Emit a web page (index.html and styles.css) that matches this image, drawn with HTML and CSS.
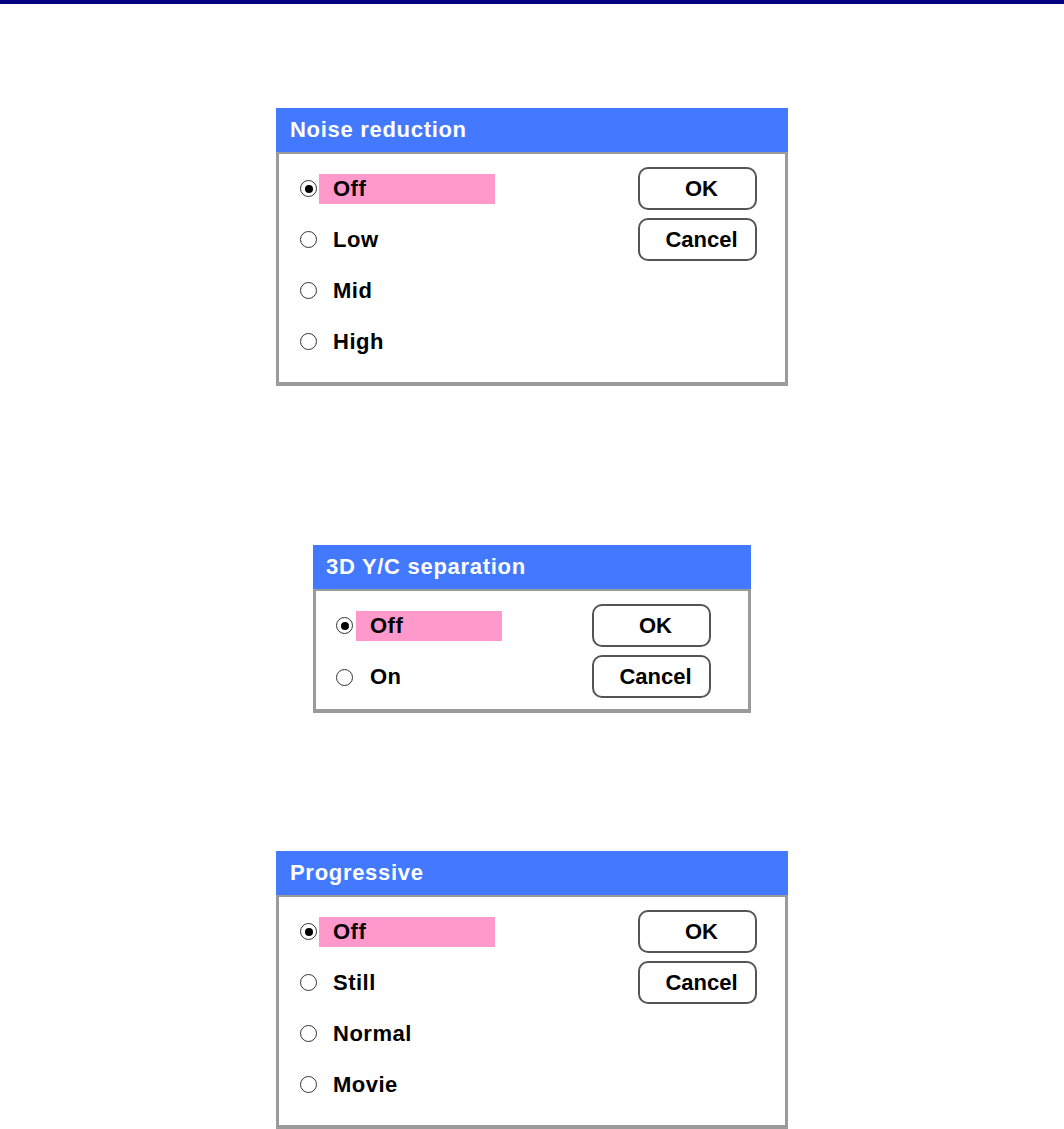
FILE: index.html
```html
<!DOCTYPE html>
<html>
<head>
<meta charset="utf-8">
<link rel="stylesheet" href="styles.css">
</head>
<body>
<div class="topbar"></div>
<main class="page">
  <section class="dialog dialog-wide dialog-first">
    <header class="dialog-title">Noise reduction</header>
    <div class="dialog-body">
      <ul class="options">
        <li class="option selected"><span class="radio"></span><span class="label">Off</span></li>
        <li class="option"><span class="radio"></span><span class="label">Low</span></li>
        <li class="option"><span class="radio"></span><span class="label">Mid</span></li>
        <li class="option"><span class="radio"></span><span class="label">High</span></li>
      </ul>
      <div class="buttons">
        <button class="btn">OK</button>
        <button class="btn">Cancel</button>
      </div>
    </div>
  </section>

  <section class="dialog dialog-narrow">
    <header class="dialog-title">3D Y/C separation</header>
    <div class="dialog-body">
      <ul class="options">
        <li class="option selected"><span class="radio"></span><span class="label">Off</span></li>
        <li class="option"><span class="radio"></span><span class="label">On</span></li>
      </ul>
      <div class="buttons">
        <button class="btn">OK</button>
        <button class="btn">Cancel</button>
      </div>
    </div>
  </section>

  <section class="dialog dialog-wide dialog-third">
    <header class="dialog-title">Progressive</header>
    <div class="dialog-body">
      <ul class="options">
        <li class="option selected"><span class="radio"></span><span class="label">Off</span></li>
        <li class="option"><span class="radio"></span><span class="label">Still</span></li>
        <li class="option"><span class="radio"></span><span class="label">Normal</span></li>
        <li class="option"><span class="radio"></span><span class="label">Movie</span></li>
      </ul>
      <div class="buttons">
        <button class="btn">OK</button>
        <button class="btn">Cancel</button>
      </div>
    </div>
  </section>
</main>
</body>
</html>
```

FILE: styles.css
```css
html, body {
  margin: 0;
  padding: 0;
  background: #ffffff;
}

body {
  font-family: "Liberation Sans", Arial, sans-serif;
  width: 1064px;
  height: 1129px;
  overflow: hidden;
}

.topbar {
  height: 4px;
  background: #000080;
}

.page {
  display: flex;
  flex-direction: column;
  align-items: center;
}

.dialog {
  display: flex;
  flex-direction: column;
}

.dialog-wide { width: 512px; }
.dialog-narrow { width: 438px; margin-top: 159px; }
.dialog-first { margin-top: 104px; }
.dialog-third { margin-top: 138px; }

.dialog-title {
  height: 44px;
  background: #4379ff;
  color: #ffffff;
  font-size: 22px;
  font-weight: bold;
  letter-spacing: 0.7px;
  line-height: 44px;
  padding-left: 14px;
}

.dialog-narrow .dialog-title { padding-left: 13px; }

.dialog-body {
  display: flex;
  justify-content: space-between;
  border-style: solid;
  border-color: #9a9a9a;
  border-width: 2px 3px 4px 3px;
  padding: 9px 28px 15px 21px;
}

.dialog-narrow .dialog-body {
  padding: 9px 37px 6px 20px;
}

.options {
  list-style: none;
  margin: 0;
  padding: 0;
  display: flex;
  flex-direction: column;
}

.option {
  height: 51px;
  display: flex;
  align-items: center;
}

.dialog-narrow .option { height: 51.5px; }

.radio {
  width: 17px;
  height: 17px;
  box-sizing: border-box;
  border: 1.6px solid #333333;
  border-radius: 50%;
  display: flex;
  align-items: center;
  justify-content: center;
  flex: none;
}

.selected .radio::after {
  content: "";
  width: 8px;
  height: 8px;
  border-radius: 50%;
  background: #000000;
}

.label {
  height: 30px;
  line-height: 30px;
  width: 176px;
  box-sizing: border-box;
  margin-left: 2px;
  padding-left: 14px;
  font-size: 22px;
  font-weight: bold;
  color: #000000;
  letter-spacing: 0.5px;
}

.dialog-narrow .label {
  width: 146px;
  margin-left: 3px;
}

.selected .label {
  background: #ff99cc;
}

.buttons {
  display: flex;
  flex-direction: column;
  gap: 8px;
  padding-top: 4px;
}

.btn {
  width: 119px;
  height: 43px;
  box-sizing: border-box;
  border: 2px solid #555555;
  border-radius: 10px;
  background: #ffffff;
  font-family: "Liberation Sans", Arial, sans-serif;
  font-size: 22px;
  font-weight: bold;
  color: #000000;
  padding: 0 0 0 8px;
  margin: 0;
  line-height: 39px;
  text-align: center;
}
```
